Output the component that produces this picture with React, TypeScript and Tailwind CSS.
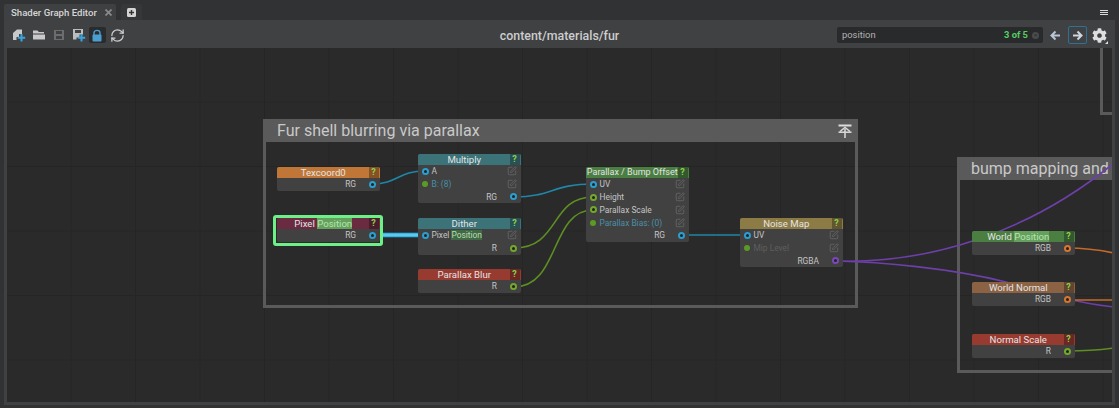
import React from "react";
import { RefreshCw, SquarePen } from "lucide-react";
import { FaCog } from "react-icons/fa";

const Hl = ({ children }: { children: React.ReactNode }) => (
  <span className="bg-[#66a05e] text-[#b4e6ac]">{children}</span>
);
const RowHl = ({ children }: { children: React.ReactNode }) => (
  <span className="bg-[#3f6a44] text-[#bcd9b6]">{children}</span>
);

type Row = {
  label: React.ReactNode;
  side: "in" | "out" | "val";
  color?: "blue" | "green" | "purple" | "orange";
  dim?: boolean;
};

const ring: Record<string, string> = {
  blue: "border-[#2a9fd0]",
  green: "border-[#74a82a]",
  purple: "border-[#7d47b8]",
  orange: "border-[#d9752c]",
};

function Port({ color }: { color: string }) {
  return <span className={`block size-[7px] shrink-0 rounded-full border-2 bg-[#1f2326] ${ring[color]}`} />;
}

function Node({
  pos,
  title,
  head,
  rows,
  titleSize = "text-[9.6px]",
}: {
  pos: string;
  title: React.ReactNode;
  head: string;
  rows: Row[];
  titleSize?: string;
}) {
  return (
    <div className={`absolute w-[102.5px] overflow-hidden rounded-[2px] bg-[#414141] ${pos}`}>
      <div className={`relative flex h-[11px] items-center justify-center pr-[10px] leading-none text-[#e4e4e4] ${head} ${titleSize}`}>
        <span className="whitespace-nowrap">{title}</span>
        <span className="absolute right-[1px] top-0 flex h-[11px] w-[10px] items-center justify-center bg-black/30 text-[9px] font-bold text-[#8ed04a]">?</span>
      </div>
      <div className="flex flex-col">
        {rows.map((r, i) =>
          r.side === "out" ? (
            <div key={i} className="flex h-[12.8px] items-center justify-end gap-[13px] pr-[3.5px] text-[8.4px] leading-none text-[#c4c4c4]">
              <span>{r.label}</span>
              <Port color={r.color ?? "blue"} />
            </div>
          ) : (
            <div key={i} className="flex h-[12.8px] items-center gap-[3px] pl-[3.5px] pr-[4px] text-[8.4px] leading-none text-[#c4c4c4]">
              {r.side === "in" ? (
                <Port color={r.color ?? "blue"} />
              ) : (
                <span className="mx-[0.5px] block size-[6px] shrink-0 rounded-full bg-[#5c9a26]" />
              )}
              <span className={`whitespace-nowrap ${r.side === "val" ? (r.dim ? "text-[#5e5e5e]" : "text-[#4a8fa8]") : ""}`}>{r.label}</span>
              <SquarePen className="ml-auto shrink-0 text-[#737373]" size={10} strokeWidth={1.5} />
            </div>
          )
        )}
      </div>
    </div>
  );
}

function Wires() {
  return (
    <svg className="absolute left-0 top-0" width="1119" height="408" viewBox="7 48 1119 408" fill="none">
      <g stroke="#6d3fa8" strokeWidth="1.6">
        <path d="M836 261 C 930 264 1030 232 1114 163" />
        <path d="M836 261 C 880 262 950 268 1006 282 C 1040 292 1080 304 1114 307" />
      </g>
      <g stroke="#1f86a8" strokeWidth="1.6">
        <path d="M372 184 C 398 184 398 171 425 171" />
        <path d="M514 197 C 552 197 552 184 593 184" />
        <path d="M681 235 L 747 235" />
      </g>
      <g stroke="#5e8f22" strokeWidth="1.6">
        <path d="M514 248 C 560 248 550 197 593 197" />
        <path d="M514 287 C 560 287 550 210 593 210" />
        <path d="M1067 351 C 1085 351 1100 350 1114 348" />
      </g>
      <g stroke="#c46a28" strokeWidth="1.6">
        <path d="M1067 248 C 1085 248 1100 250 1114 253" />
        <path d="M1067 300 L 1114 300" />
      </g>
      <path d="M372 235 L 425 235" stroke="#35b4e6" strokeWidth="4.5" />
      <path d="M372 235 L 425 235" stroke="#86dcf9" strokeWidth="1" />
    </svg>
  );
}

function CommentFrame({ pos, title, pin }: { pos: string; title: string; pin?: boolean }) {
  return (
    <div className={`absolute border-[3px] border-[#5a5a5a] ${pos}`}>
      <div className="flex h-[20px] items-center justify-between whitespace-nowrap bg-[#5a5a5a] pl-[11px] pr-[2px] text-[16px] leading-none text-[#c9c9c9]">
        <span className="relative -top-[1px]">{title}</span>
        {pin && (
          <svg width="14" height="14" viewBox="0 0 14 14" fill="none" stroke="#dcdcdc" strokeWidth="1.5" className="relative -left-[1px] -top-[1px]">
            <path d="M0.5 1.5H13.5" strokeWidth="2" />
            <path d="M2 7.5L7 3.5L12 7.5" />
            <path d="M0.5 8.2H13.5" />
            <path d="M7 5V14" />
          </svg>
        )}
      </div>
    </div>
  );
}

const Icons = {
  newFile: (
    <svg width="14" height="14" viewBox="0 0 14 14">
      <path d="M1 5L5 1.5H10V6H7V9H4.5V12H1Z" fill="#c9c9c9" />
      <path d="M9.5 6V13.5M5.8 9.8H13.2" stroke="#3aa5dc" strokeWidth="2" />
    </svg>
  ),
  folder: (
    <svg width="14" height="14" viewBox="0 0 14 14">
      <path d="M1 2.5H5.5L6.8 4H12V5.5H1Z" fill="#c9c9c9" />
      <path d="M1 6.5H13V11.5H1Z" fill="#c9c9c9" />
    </svg>
  ),
  save: (
    <svg width="12" height="12" viewBox="0 0 12 12">
      <path fillRule="evenodd" d="M1 1H11V11H1ZM3 2V5H9V2ZM3 7V10H9V7Z" fill="#6d6d6d" />
    </svg>
  ),
  saveAs: (
    <svg width="14" height="14" viewBox="0 0 14 14">
      <path fillRule="evenodd" d="M1 1H11V6.5H7.5V9.5H4.5V11.5H1ZM3 2V5H9V2Z" fill="#bdbdbd" />
      <path d="M9.5 6V13.5M5.8 9.8H13.2" stroke="#3aa5dc" strokeWidth="2" />
    </svg>
  ),
  lock: (
    <svg width="10" height="13" viewBox="0 0 10 13">
      <path d="M2 6V3.8C2 0.5 8 0.5 8 3.8V6" fill="none" stroke="#4a9fd0" strokeWidth="1.4" />
      <rect x="0.5" y="5.5" width="9" height="7" rx="1" fill="#4a9fd0" />
    </svg>
  ),
  arrow: (flip: boolean, c: string) => (
    <svg width="11" height="11" viewBox="0 0 11 11" className={flip ? "-scale-x-100" : ""}>
      <path d="M1 5.5H9M5.5 1.5L9.5 5.5L5.5 9.5" stroke={c} strokeWidth="2" fill="none" />
    </svg>
  ),
};

export default function App() {
  return (
    <div className="flex h-[408px] w-[1119px] flex-col overflow-hidden bg-[#303234] font-['Roboto',sans-serif]">
      {/* tab bar */}
      <div className="flex h-[20px] shrink-0 items-end pl-[4px] pr-[11px]">
        <div className="flex h-[16px] w-[112px] items-center rounded-t-[2px] bg-[#3e4042] pl-[7px] pt-[1px] text-[9.6px] font-medium leading-none text-[#d6d6d6]">
          <span className="whitespace-nowrap">Shader Graph Editor</span>
          <svg width="7" height="7" viewBox="0 0 7 7" className="ml-[8px] shrink-0" stroke="#8a8a8a" strokeWidth="1.7">
            <path d="M0.5 0.5L6.5 6.5M6.5 0.5L0.5 6.5" />
          </svg>
        </div>
        <div className="ml-[5px] flex h-[16px] w-[21px] items-center justify-center rounded-t-[2px] bg-[#353739]">
          <svg width="9" height="9" viewBox="0 0 9 9">
            <rect width="9" height="9" rx="1.5" fill="#d4d4d4" />
            <path d="M4.5 2V7M2 4.5H7" stroke="#333" strokeWidth="1.4" />
          </svg>
        </div>
        <div className="ml-auto mb-[5px] flex w-[8px] flex-col gap-[1px] self-end">
          <span className="h-[1px] bg-[#d8d8d8]" />
          <span className="h-[1px] bg-[#d8d8d8]" />
          <span className="h-[1px] bg-[#d8d8d8]" />
        </div>
      </div>

      {/* toolbar + canvas shell */}
      <div className="mx-[4px] mb-[3px] flex min-h-0 flex-1 flex-col bg-[#3f4143] px-[3px] pb-[3px]">
        <div className="relative -mx-[3px] flex h-[28px] shrink-0 items-center pl-[5px] pr-[8px] pt-[2px]">
          <div className="flex items-center">
            <span className="flex w-[20px] justify-center">{Icons.newFile}</span>
            <span className="flex w-[19.5px] justify-center">{Icons.folder}</span>
            <span className="flex w-[20px] justify-center">{Icons.save}</span>
            <span className="flex w-[20px] justify-center">{Icons.saveAs}</span>
            <span className="flex h-[16px] w-[17px] items-center justify-center rounded-[2px] bg-[#2a2b2d]">{Icons.lock}</span>
            <RefreshCw size={15} strokeWidth={2} className="ml-[4px] text-[#cfcfcf]" />
          </div>
          <div className="absolute inset-x-0 top-[10px] text-center text-[12.4px] font-medium leading-none text-[#cdcdcd]">
            <span className="relative">content/materials/fur</span>
          </div>
          <div className="relative ml-auto flex items-center">
            <div className="flex h-[16px] w-[206px] items-center rounded-[2px] bg-[#292a2c] pl-[5px] pr-[4px] text-[9.4px] leading-none text-[#b3b3b3]">
              <span>position</span>
              <span className="ml-auto font-bold text-[#54cf62]">3 of 5</span>
              <span className="ml-[4px] flex size-[7px] items-center justify-center rounded-full bg-[#4a4b4d] text-[6px] text-[#292a2c]">×</span>
            </div>
            <span className="ml-[6px] flex w-[12px] justify-center">{Icons.arrow(true, "#b9c6d6")}</span>
            <span className="ml-[7px] flex h-[18px] w-[19px] items-center justify-center rounded-[2px] border border-[#2f7099]">{Icons.arrow(false, "#cfd6de")}</span>
            <span className="relative ml-[5px]">
              <FaCog size={15} className="text-[#dedede]" />
              <span className="absolute -bottom-[1px] -right-[1px] size-0 border-b-[3px] border-l-[3px] border-b-[#dedede] border-l-transparent" />
            </span>
          </div>
        </div>

        <div className="relative min-h-0 flex-1 overflow-hidden bg-[#2a2a2a] bg-[linear-gradient(#252525_1px,transparent_1px),linear-gradient(90deg,#252525_1px,transparent_1px)] bg-[size:64.5px_64.5px] bg-[position:-1px_-11px]">
          <CommentFrame pos="left-[256px] top-[71px] h-[189px] w-[595px]" title="Fur shell blurring via parallax" pin />
          <CommentFrame pos="left-[950px] top-[109px] h-[216px] w-[300px]" title="bump mapping and" />
          <CommentFrame pos="left-[1093px] -top-[60px] h-[127px] w-[100px]" title="" />

          <Wires />

          <Node pos="left-[270px] top-[119px]" title="Texcoord0" head="bg-[#c07636]" rows={[{ label: "RG", side: "out" }]} />
          <div className="absolute left-[266px] top-[167px] h-[31px] w-[110px] rounded-[3px] border-[3px] border-[#6cf087]" />
          <Node
            pos="left-[270px] top-[170px]"
            title={<>Pixel <Hl>Position</Hl></>}
            head="bg-[#6a2a40]"
            rows={[{ label: "RG", side: "out" }]}
          />
          <Node
            pos="left-[411px] top-[106px]"
            title="Multiply"
            head="bg-[#3b7379]"
            rows={[
              { label: "A", side: "in" },
              { label: "B: (8)", side: "val" },
              { label: "RG", side: "out" },
            ]}
          />
          <Node
            pos="left-[411px] top-[170px]"
            title="Dither"
            head="bg-[#3b7379]"
            rows={[
              { label: <>Pixel <RowHl>Position</RowHl></>, side: "in" },
              { label: "R", side: "out", color: "green" },
            ]}
          />
          <Node pos="left-[411px] top-[221px]" title="Parallax Blur" head="bg-[#973a30]" rows={[{ label: "R", side: "out", color: "green" }]} />
          <Node
            pos="left-[579px] top-[119px]"
            title="Parallax / Bump Offset"
            head="bg-[#4b7f42]"
            titleSize="text-[9px]"
            rows={[
              { label: "UV", side: "in" },
              { label: "Height", side: "in", color: "green" },
              { label: "Parallax Scale", side: "in", color: "green" },
              { label: "Parallax Bias: (0)", side: "val" },
              { label: "RG", side: "out" },
            ]}
          />
          <Node
            pos="left-[733px] top-[170px]"
            title="Noise Map"
            head="bg-[#8c7b44]"
            rows={[
              { label: "UV", side: "in" },
              { label: "Mip Level", side: "val", dim: true },
              { label: "RGBA", side: "out", color: "purple" },
            ]}
          />
          <Node pos="left-[965px] top-[183px]" title={<>World <Hl>Position</Hl></>} head="bg-[#4b7f42]" rows={[{ label: "RGB", side: "out", color: "orange" }]} />
          <Node pos="left-[965px] top-[234px]" title="World Normal" head="bg-[#8b6344]" rows={[{ label: "RGB", side: "out", color: "orange" }]} />
          <Node pos="left-[965px] top-[286px]" title="Normal Scale" head="bg-[#973a30]" rows={[{ label: "R", side: "out", color: "green" }]} />
        </div>
      </div>
    </div>
  );
}
